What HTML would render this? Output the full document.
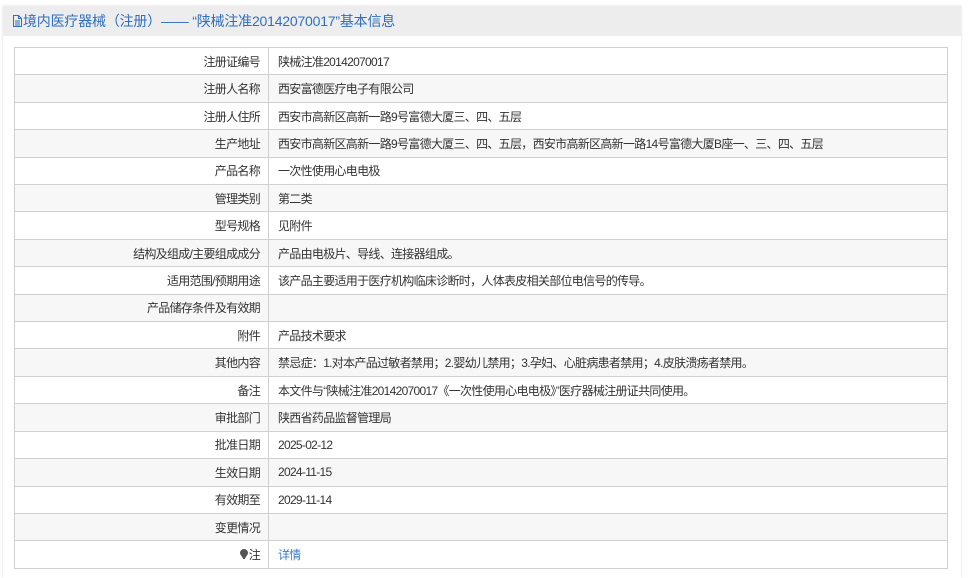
<!DOCTYPE html>
<html><head><meta charset="utf-8"><style>
body{margin:0;background:#fff;font-family:"Liberation Sans","Noto Sans CJK SC",sans-serif;font-size:12px;color:#333;}
.panel{position:absolute;left:3px;top:6px;width:958px;height:572px;background:#fff;box-shadow:0 0 3px #ddd;}
.hd{height:30px;background:#ededed;color:#2f6fbe;font-size:14px;line-height:31px;padding-left:9px;letter-spacing:-0.2px;}
table{position:absolute;left:11px;top:41px;width:934px;border-collapse:collapse;letter-spacing:-0.7px;}
td{border:1px solid #d0d0d0;height:26.42px;padding:0;}
td.l{width:245px;text-align:right;padding-right:8px;}
td.v{padding-left:9px;}
tr:nth-child(even) td{background:#f7f7f7;}
a{color:#3a7ec9;text-decoration:none;}
</style></head><body>
<div class="panel">
<div class="hd"><svg width="11" height="12" viewBox="0 0 11 12" style="vertical-align:-1px"><path d="M1.5 .5h5l3 3v8h-8z M6.5 .5v3h3 M3 6h5 M3 8h5 M3 10h5" fill="none" stroke="#2f6fbe"/></svg>境内医疗器械（注册）—— “陕械注准20142070017”基本信息</div>
<table>
<tr><td class="l">注册证编号</td><td class="v">陕械注准20142070017</td></tr>
<tr><td class="l">注册人名称</td><td class="v">西安富德医疗电子有限公司</td></tr>
<tr><td class="l">注册人住所</td><td class="v">西安市高新区高新一路9号富德大厦三、四、五层</td></tr>
<tr><td class="l">生产地址</td><td class="v">西安市高新区高新一路9号富德大厦三、四、五层，西安市高新区高新一路14号富德大厦B座一、三、四、五层</td></tr>
<tr><td class="l">产品名称</td><td class="v">一次性使用心电电极</td></tr>
<tr><td class="l">管理类别</td><td class="v">第二类</td></tr>
<tr><td class="l">型号规格</td><td class="v">见附件</td></tr>
<tr><td class="l">结构及组成/主要组成成分</td><td class="v">产品由电极片、导线、连接器组成。</td></tr>
<tr><td class="l">适用范围/预期用途</td><td class="v">该产品主要适用于医疗机构临床诊断时，人体表皮相关部位电信号的传导。</td></tr>
<tr><td class="l">产品储存条件及有效期</td><td class="v"></td></tr>
<tr><td class="l">附件</td><td class="v">产品技术要求</td></tr>
<tr><td class="l">其他内容</td><td class="v">禁忌症：1.对本产品过敏者禁用；2.婴幼儿禁用；3.孕妇、心脏病患者禁用；4.皮肤溃疡者禁用。</td></tr>
<tr><td class="l">备注</td><td class="v">本文件与“陕械注准20142070017《一次性使用心电电极》”医疗器械注册证共同使用。</td></tr>
<tr><td class="l">审批部门</td><td class="v">陕西省药品监督管理局</td></tr>
<tr><td class="l">批准日期</td><td class="v">2025-02-12</td></tr>
<tr><td class="l">生效日期</td><td class="v">2024-11-15</td></tr>
<tr><td class="l">有效期至</td><td class="v">2029-11-14</td></tr>
<tr><td class="l">变更情况</td><td class="v"></td></tr>
<tr><td class="l"><svg width="8" height="11" viewBox="0 0 8 11" style="vertical-align:-1px;margin-right:1px"><path d="M4 .5a3.5 3.5 0 0 1 3.5 3.5c0 2-2 3-2.5 4.5h-2C2.5 7 .5 6 .5 4A3.5 3.5 0 0 1 4 .5z M3 9.5h2" fill="#555" stroke="#555"/></svg>注</td><td class="v"><a>详情</a></td></tr>
</table>
</div>
</body></html>
